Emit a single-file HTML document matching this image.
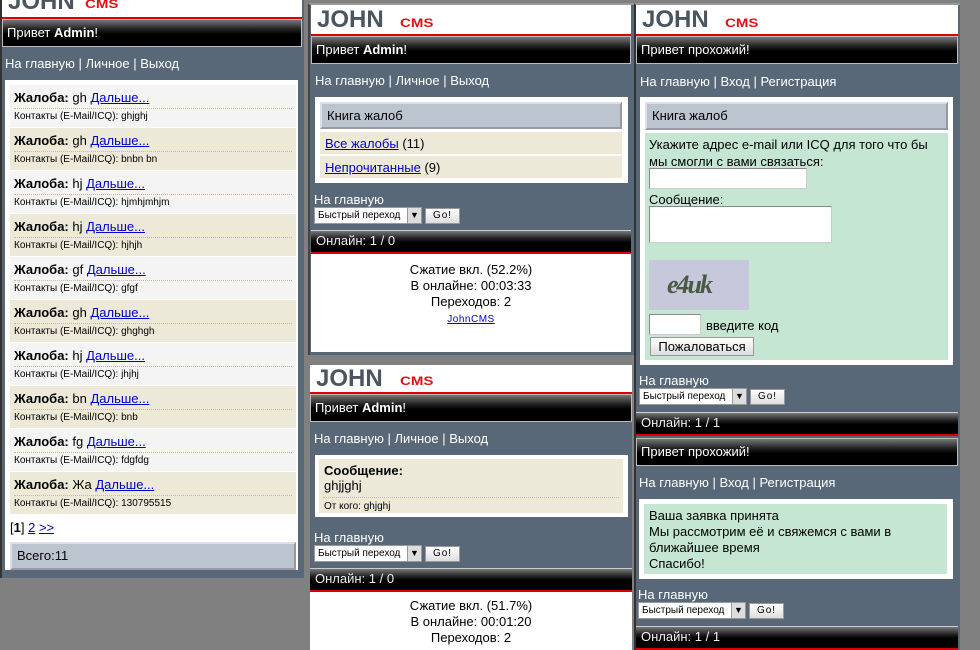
<!DOCTYPE html>
<html><head><meta charset="utf-8"><style>
*{margin:0;padding:0;box-sizing:border-box}
body{width:980px;height:650px;background:#808080;position:relative;overflow:hidden;font-family:"Liberation Sans",sans-serif;font-size:12px;color:#000}
.a{position:absolute}
.pan{position:absolute;background:#586878}
.logo{position:absolute;background:#fff;border-bottom:2px solid #e00000;overflow:hidden}
.logo .j{position:absolute;left:6px;top:3px;font:bold 24px/24px "Liberation Sans",sans-serif;color:#4a5560}
.logo .c{position:absolute;top:12px;font:bold 12px/12px "Liberation Sans",sans-serif;color:#e01010;transform:scaleX(1.25);transform-origin:left}
.hdr{position:absolute;background:linear-gradient(#777 0,#222 35%,#000 55%,#000);border:1px solid #bbb;color:#fff;font-size:13px;padding-left:4px;line-height:25px}
.on{position:absolute;background:linear-gradient(#777 0,#222 35%,#000 55%,#000);border-top:1px solid #ccc;border-bottom:2px solid #d00;color:#eee;font-size:13px;padding-left:5px;line-height:20px}
.nav{position:absolute;color:#fff;font-size:13px}
.wb{position:absolute;background:#fff}
.it{position:absolute;left:5px;width:286px;height:42px}
.it .t{position:absolute;left:4px;top:5px;font-size:13px;white-space:nowrap}
.it .d{position:absolute;left:4px;right:4px;top:23px;border-top:1px dotted #c8c070}
.it .k{position:absolute;left:4px;top:26px;font-size:10px;white-space:nowrap}
a{color:#00c;text-decoration:underline}
.sel{position:absolute;height:17px;width:108px;background:#fff;border:1px solid #999;font-size:10px;line-height:15px;padding-left:3px;overflow:hidden;white-space:nowrap}
.sel i{position:absolute;right:0;top:0;width:14px;height:15px;background:#ddd;border-left:1px solid #999;text-align:center;font-size:9px;font-style:normal}
.go{position:absolute;height:16px;width:35px;background:linear-gradient(#fff,#ddd);border:1px solid #999;font-size:10px;line-height:14px;text-align:center;letter-spacing:1px}
.gh{position:absolute;background:#bcc4d0;border:2px solid;border-color:#dde #999 #99a #dde;font-size:13px;padding-left:5px}
.bg{background:#ece9d8}
.inp{position:absolute;background:#fff;border:1px solid #888;border-right-color:#ccc;border-bottom-color:#ccc}
</style></head><body>

<!-- Panel 1 -->
<div class="pan" style="left:0;top:0;width:304px;height:578px;border-left:2px solid #333"></div>
<div class="logo" style="left:2px;top:0;width:300px;height:19px"><span class="j" style="top:-10px">JOHN</span><span class="c" style="left:83px;top:-2px">CMS</span></div>
<div class="hdr" style="left:2px;top:19px;width:300px;height:28px">Привет <b>Admin</b>!</div>
<div class="nav" style="left:5px;top:56px">На главную | Личное | Выход</div>
<div class="wb" style="left:5px;top:80px;width:293px;height:490px">
<div class="it" style="top:5px;background:#f4f4f4"><div class="t"><b>Жалоба:</b> gh <a>Дальше...</a></div><div class="d"></div><div class="k">Контакты (E-Mail/ICQ): ghjghj</div></div>
<div class="it bg" style="top:48px"><div class="t"><b>Жалоба:</b> gh <a>Дальше...</a></div><div class="d"></div><div class="k">Контакты (E-Mail/ICQ): bnbn bn</div></div>
<div class="it" style="top:91px;background:#f4f4f4"><div class="t"><b>Жалоба:</b> hj <a>Дальше...</a></div><div class="d"></div><div class="k">Контакты (E-Mail/ICQ): hjmhjmhjm</div></div>
<div class="it bg" style="top:134px"><div class="t"><b>Жалоба:</b> hj <a>Дальше...</a></div><div class="d"></div><div class="k">Контакты (E-Mail/ICQ): hjhjh</div></div>
<div class="it" style="top:177px;background:#f4f4f4"><div class="t"><b>Жалоба:</b> gf <a>Дальше...</a></div><div class="d"></div><div class="k">Контакты (E-Mail/ICQ): gfgf</div></div>
<div class="it bg" style="top:220px"><div class="t"><b>Жалоба:</b> gh <a>Дальше...</a></div><div class="d"></div><div class="k">Контакты (E-Mail/ICQ): ghghgh</div></div>
<div class="it" style="top:263px;background:#f4f4f4"><div class="t"><b>Жалоба:</b> hj <a>Дальше...</a></div><div class="d"></div><div class="k">Контакты (E-Mail/ICQ): jhjhj</div></div>
<div class="it bg" style="top:306px"><div class="t"><b>Жалоба:</b> bn <a>Дальше...</a></div><div class="d"></div><div class="k">Контакты (E-Mail/ICQ): bnb</div></div>
<div class="it" style="top:349px;background:#f4f4f4"><div class="t"><b>Жалоба:</b> fg <a>Дальше...</a></div><div class="d"></div><div class="k">Контакты (E-Mail/ICQ): fdgfdg</div></div>
<div class="it bg" style="top:392px"><div class="t"><b>Жалоба:</b> Жа <a>Дальше...</a></div><div class="d"></div><div class="k">Контакты (E-Mail/ICQ): 130795515</div></div>
<div class="a" style="left:5px;top:440px;font-size:13px">[<b>1</b>] <a>2</a> <a>&gt;&gt;</a></div>
<div class="gh" style="left:5px;top:462px;width:286px;height:28px;line-height:24px">Всего:11</div>
</div>

<!-- Panel 2 -->
<div class="pan" style="left:308px;top:3px;width:326px;height:352px;border-left:2px solid #444;border-top:2px solid #999"></div>
<div class="logo" style="left:311px;top:5px;width:320px;height:31px"><span class="j">JOHN</span><span class="c" style="left:89px">CMS</span></div>
<div class="hdr" style="left:311px;top:36px;width:320px;height:28px">Привет <b>Admin</b>!</div>
<div class="nav" style="left:315px;top:73px">На главную | Личное | Выход</div>
<div class="wb" style="left:315px;top:97px;width:313px;height:86px">
<div class="gh" style="left:5px;top:5px;width:302px;height:27px;line-height:23px">Книга жалоб</div>
<div class="a bg" style="left:5px;top:35px;width:302px;height:22px;font-size:13px;padding:4px 5px"><a>Все жалобы</a> (11)</div>
<div class="a bg" style="left:5px;top:59px;width:302px;height:22px;font-size:13px;padding:4px 5px"><a>Непрочитанные</a> (9)</div>
</div>
<div class="nav" style="left:314px;top:192px">На главную</div>
<div class="sel" style="left:314px;top:207px">Быстрый переход<i>▼</i></div>
<div class="go" style="left:425px;top:208px">Go!</div>
<div class="on" style="left:311px;top:230px;width:320px;height:24px">Онлайн: 1 / 0</div>
<div class="wb" style="left:311px;top:254px;width:320px;height:98px;text-align:center;font-size:13px;line-height:16px;padding-top:8px">Сжатие вкл. (52.2%)<br>В онлайне: 00:03:33<br>Переходов: 2<br><a style="font-size:10px;letter-spacing:.5px">JohnCMS</a></div>

<!-- Panel 3 -->
<div class="pan" style="left:310px;top:365px;width:322px;height:285px"></div>
<div class="logo" style="left:310px;top:365px;width:322px;height:29px"><span class="j" style="top:2px">JOHN</span><span class="c" style="left:90px;top:10px">CMS</span></div>
<div class="hdr" style="left:310px;top:394px;width:322px;height:28px">Привет <b>Admin</b>!</div>
<div class="nav" style="left:314px;top:431px">На главную | Личное | Выход</div>
<div class="wb" style="left:315px;top:455px;width:313px;height:62px">
<div class="a bg" style="left:4px;top:4px;width:304px;height:54px">
<div class="a" style="left:5px;top:4px;font-size:13px"><b>Сообщение:</b><br>ghjjghj</div>
<div class="a" style="left:4px;right:4px;top:38px;border-top:1px dotted #c8c070"></div>
<div class="a" style="left:5px;top:42px;font-size:10px">От кого: ghjghj</div>
</div></div>
<div class="nav" style="left:314px;top:530px">На главную</div>
<div class="sel" style="left:314px;top:545px">Быстрый переход<i>▼</i></div>
<div class="go" style="left:425px;top:546px">Go!</div>
<div class="on" style="left:310px;top:568px;width:322px;height:24px">Онлайн: 1 / 0</div>
<div class="wb" style="left:310px;top:592px;width:322px;height:58px;text-align:center;font-size:13px;line-height:16px;padding-top:6px">Сжатие вкл. (51.7%)<br>В онлайне: 00:01:20<br>Переходов: 2</div>

<!-- Panel 4 -->
<div class="pan" style="left:634px;top:3px;width:326px;height:434px;border-left:2px solid #333;border-top:2px solid #999"></div>
<div class="logo" style="left:636px;top:5px;width:322px;height:31px"><span class="j">JOHN</span><span class="c" style="left:89px">CMS</span></div>
<div class="hdr" style="left:636px;top:36px;width:322px;height:28px">Привет прохожий!</div>
<div class="nav" style="left:640px;top:74px">На главную | Вход | Регистрация</div>
<div class="wb" style="left:640px;top:97px;width:313px;height:268px">
<div class="gh" style="left:5px;top:5px;width:303px;height:28px;line-height:24px">Книга жалоб</div>
<div class="a" style="left:5px;top:36px;width:303px;height:227px;background:#c6e6d4;font-size:13px;line-height:17px;padding:3px 4px">Укажите адрес e-mail или ICQ для того что бы мы смогли с вами связаться:</div>
<div class="inp" style="left:9px;top:71px;width:158px;height:21px"></div>
<div class="a" style="left:9px;top:95px;font-size:13px">Сообщение:</div>
<div class="inp" style="left:9px;top:109px;width:183px;height:37px"></div>
<div class="a" style="left:9px;top:163px;width:100px;height:50px;background:#c8c8dc;font:italic bold 26px 'Liberation Serif',serif;color:#4a5a40;padding:10px 0 0 18px;letter-spacing:-2px">e4uk</div>
<div class="inp" style="left:9px;top:217px;width:52px;height:21px"></div>
<div class="a" style="left:66px;top:221px;font-size:13px">введите код</div>
<div class="a" style="left:10px;top:240px;width:104px;height:19px;background:linear-gradient(#fff,#ddd);border:1px solid #999;font-size:13px;text-align:center;line-height:17px">Пожаловаться</div>
</div>
<div class="nav" style="left:639px;top:373px">На главную</div>
<div class="sel" style="left:639px;top:388px">Быстрый переход<i>▼</i></div>
<div class="go" style="left:750px;top:389px">Go!</div>
<div class="on" style="left:636px;top:412px;width:322px;height:24px">Онлайн: 1 / 1</div>

<!-- Panel 5 -->
<div class="pan" style="left:634px;top:437px;width:326px;height:213px;border-left:2px solid #333"></div>
<div class="hdr" style="left:636px;top:438px;width:322px;height:28px">Привет прохожий!</div>
<div class="nav" style="left:639px;top:475px">На главную | Вход | Регистрация</div>
<div class="wb" style="left:639px;top:499px;width:314px;height:80px">
<div class="a" style="left:5px;top:5px;width:303px;height:70px;background:#c6e6d4;font-size:13px;line-height:16px;padding:4px 5px">Ваша заявка принята<br>Мы рассмотрим её и свяжемся с вами в ближайшее время<br>Спасибо!</div>
</div>
<div class="nav" style="left:638px;top:587px">На главную</div>
<div class="sel" style="left:638px;top:602px">Быстрый переход<i>▼</i></div>
<div class="go" style="left:749px;top:603px">Go!</div>
<div class="on" style="left:636px;top:626px;width:322px;height:24px">Онлайн: 1 / 1</div>
</body></html>
